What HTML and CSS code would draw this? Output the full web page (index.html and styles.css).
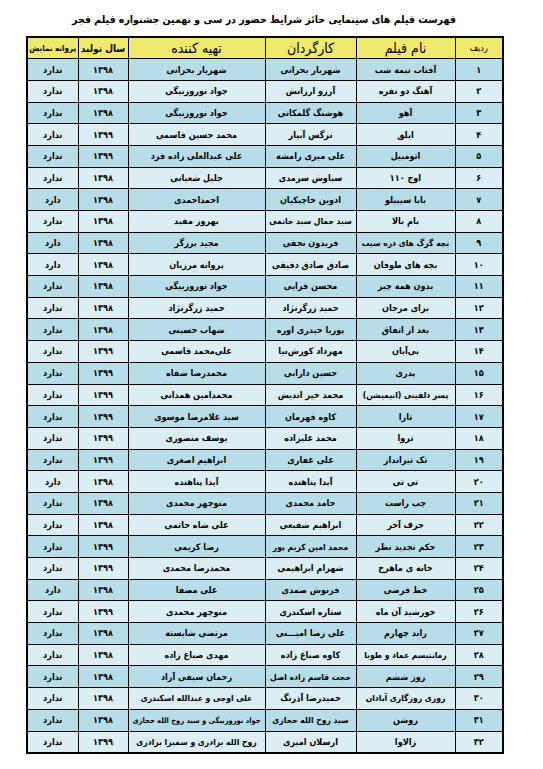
FILE: index.html
```html
<!DOCTYPE html>
<html lang="fa">
<head>
<meta charset="utf-8">
<title>فهرست فیلم ها</title>
<link rel="stylesheet" href="styles.css">
</head>
<body>
<div class="page">
  <h1 class="title" dir="rtl">فهرست فیلم های سینمایی حائز شرایط حضور در سی و نهمین جشنواره فیلم فجر</h1>
  <table class="films" dir="rtl">
    <colgroup>
      <col class="c-no"><col class="c-name"><col class="c-dir"><col class="c-prod"><col class="c-year"><col class="c-lic">
    </colgroup>
    <thead>
      <tr>
        <th class="h-no">ردیف</th>
        <th class="h-big">نام فیلم</th>
        <th class="h-big">کارگردان</th>
        <th class="h-big">تهیه کننده</th>
        <th class="h-mid">سال تولید</th>
        <th class="h-small">پروانه نمایش</th>
      </tr>
    </thead>
    <tbody>
      <tr><td>۱</td><td>آفتاب نیمه شب</td><td>شهریار بحرانی</td><td>شهریار بحرانی</td><td>۱۳۹۸</td><td>ندارد</td></tr>
      <tr><td>۲</td><td>آهنگ دو نفره</td><td>آرزو ارزانش</td><td>جواد نوروزبیگی</td><td>۱۳۹۸</td><td>ندارد</td></tr>
      <tr><td>۳</td><td>آهو</td><td>هوشنگ گلمکانی</td><td>جواد نوروزبیگی</td><td>۱۳۹۸</td><td>ندارد</td></tr>
      <tr><td>۴</td><td>ابلق</td><td>نرگس آبیار</td><td>محمد حسین قاسمی</td><td>۱۳۹۹</td><td>ندارد</td></tr>
      <tr><td>۵</td><td>اتومبیل</td><td>علی میری رامشه</td><td>علی عبدالعلی زاده فرد</td><td>۱۳۹۹</td><td>ندارد</td></tr>
      <tr><td>۶</td><td>اوج ۱۱۰</td><td>سیاوش سرمدی</td><td>جلیل شعبانی</td><td>۱۳۹۸</td><td>ندارد</td></tr>
      <tr><td>۷</td><td>بابا سیبیلو</td><td>ادوین خاچیکیان</td><td>احمداحمدی</td><td>۱۳۹۸</td><td>دارد</td></tr>
      <tr><td>۸</td><td>بام بالا</td><td class="tight">سید جمال سید حاتمی</td><td>بهروز مفید</td><td>۱۳۹۸</td><td>ندارد</td></tr>
      <tr><td>۹</td><td class="tight">بچه گرگ های دره سیب</td><td>فریدون نجفی</td><td>مجید برزگر</td><td>۱۳۹۸</td><td>دارد</td></tr>
      <tr><td>۱۰</td><td>بچه های طوفان</td><td>صادق صادق دقیقی</td><td>پروانه مرزبان</td><td>۱۳۹۸</td><td>دارد</td></tr>
      <tr><td>۱۱</td><td>بدون همه چیز</td><td>محسن قرایی</td><td>جواد نوروزبیگی</td><td>۱۳۹۸</td><td>ندارد</td></tr>
      <tr><td>۱۲</td><td>برای مرجان</td><td>حمید زرگرنژاد</td><td>حمید زرگرنژاد</td><td>۱۳۹۸</td><td>ندارد</td></tr>
      <tr><td>۱۳</td><td>بعد از اتفاق</td><td>پوریا حیدری اوره</td><td>شهاب حسینی</td><td>۱۳۹۸</td><td>ندارد</td></tr>
      <tr><td>۱۴</td><td>بی‌آبان</td><td>مهرداد کورش‌نیا</td><td>علی‌محمد قاسمی</td><td>۱۳۹۹</td><td>ندارد</td></tr>
      <tr><td>۱۵</td><td>پدری</td><td>حسین دارابی</td><td>محمدرضا شفاه</td><td>۱۳۹۹</td><td>ندارد</td></tr>
      <tr><td>۱۶</td><td class="tight">پسر دلفینی (انیمیشن)</td><td>محمد خیر اندیش</td><td>محمدامین همدانی</td><td>۱۳۹۹</td><td>ندارد</td></tr>
      <tr><td>۱۷</td><td>تارا</td><td>کاوه قهرمان</td><td>سید غلامرضا موسوی</td><td>۱۳۹۹</td><td>ندارد</td></tr>
      <tr><td>۱۸</td><td>تروا</td><td>محمد علیزاده</td><td>یوسف منصوری</td><td>۱۳۹۹</td><td>ندارد</td></tr>
      <tr><td>۱۹</td><td>تک تیرانداز</td><td>علی غفاری</td><td>ابراهیم اصغری</td><td>۱۳۹۹</td><td>ندارد</td></tr>
      <tr><td>۲۰</td><td>تی تی</td><td>آیدا پناهنده</td><td>آیدا پناهنده</td><td>۱۳۹۸</td><td>دارد</td></tr>
      <tr><td>۲۱</td><td>چپ راست</td><td>حامد محمدی</td><td>منوچهر محمدی</td><td>۱۳۹۸</td><td>ندارد</td></tr>
      <tr><td>۲۲</td><td>حرف آخر</td><td>ابراهیم شفیعی</td><td>علی شاه حاتمی</td><td>۱۳۹۸</td><td>ندارد</td></tr>
      <tr><td>۲۳</td><td>حکم تجدید نظر</td><td class="tight">محمد امین کریم پور</td><td>رضا کریمی</td><td>۱۳۹۹</td><td>ندارد</td></tr>
      <tr><td>۲۴</td><td>خانه ی ماهرخ</td><td>شهرام ابراهیمی</td><td>محمدرضا محمدی</td><td>۱۳۹۹</td><td>ندارد</td></tr>
      <tr><td>۲۵</td><td>خط فرضی</td><td>فرنوش صمدی</td><td>علی مصفا</td><td>۱۳۹۸</td><td>دارد</td></tr>
      <tr><td>۲۶</td><td>خورشید آن ماه</td><td>ستاره اسکندری</td><td>منوچهر محمدی</td><td>۱۳۹۹</td><td>ندارد</td></tr>
      <tr><td>۲۷</td><td>راند چهارم</td><td>علی رضا امیـــنی</td><td>مرتضی شایسته</td><td>۱۳۹۸</td><td>ندارد</td></tr>
      <tr><td>۲۸</td><td class="tight">رمانتیسم عماد و طوبا</td><td>کاوه صباغ زاده</td><td>مهدی صباغ زاده</td><td>۱۳۹۸</td><td>ندارد</td></tr>
      <tr><td>۲۹</td><td>روز ششم</td><td class="tight">حجت قاسم زاده اصل</td><td>رحمان سیفی آزاد</td><td>۱۳۹۸</td><td>ندارد</td></tr>
      <tr><td>۳۰</td><td class="tight">روزی روزگاری آبادان</td><td>حمیدرضا آذرنگ</td><td class="tight">علی اوجی و عبدالله اسکندری</td><td>۱۳۹۸</td><td>ندارد</td></tr>
      <tr><td>۳۱</td><td>روشن</td><td class="tight">سید روح الله حجازی</td><td class="tighter">جواد نوروزبیگی و سید روح الله حجازی</td><td>۱۳۹۸</td><td>ندارد</td></tr>
      <tr><td>۳۲</td><td>زالاوا</td><td>ارسلان امیری</td><td class="tight">روح الله برادری و سمیرا برادری</td><td>۱۳۹۹</td><td>ندارد</td></tr>
    </tbody>
  </table>
</div>
</body>
</html>
```
FILE: styles.css
```css
html, body {
  margin: 0;
  padding: 0;
  background: #ffffff;
}
body {
  font-family: "DejaVu Sans Condensed", "DejaVu Sans", sans-serif;
  color: #000;
}
.page {
  width: 476px;
  padding: 10px 0 0 0;
  margin: 0 0 0 26px;
}
.title {
  margin: 0;
  height: 26px;
  line-height: 18px;
  font-size: 10.5px;
  font-weight: bold;
  text-align: center;
  white-space: nowrap;
}
.films {
  direction: rtl;
  border-collapse: collapse;
  table-layout: fixed;
  width: 476px;
  border: 2px solid #000;
}
.c-no { width: 48px; }
.c-name { width: 99px; }
.c-dir { width: 91px; }
.c-prod { width: 137px; }
.c-year { width: 50px; }
.c-lic { width: 51px; }
.films th, .films td {
  border: 1px solid #000;
  padding: 0;
  text-align: center;
  vertical-align: middle;
  font-weight: bold;
  font-size: 9px;
  white-space: nowrap;
  overflow: hidden;
}
.films td.tight { font-size: 8.5px; }
.films td.tighter { font-size: 7.5px; }
.films tr {
  height: 21.7px;
}
.films thead tr {
  background: #efe96c;
}
.films th.h-big { font-size: 14px; font-weight: normal; }
.films th.h-mid { font-size: 10px; }
.films th.h-small { font-size: 8px; }
.films th.h-no { font-size: 9px; font-weight: normal; }
.films tbody tr:nth-child(odd) { background: #b7dee8; }
.films tbody tr:nth-child(even) { background: #daeef3; }
```
